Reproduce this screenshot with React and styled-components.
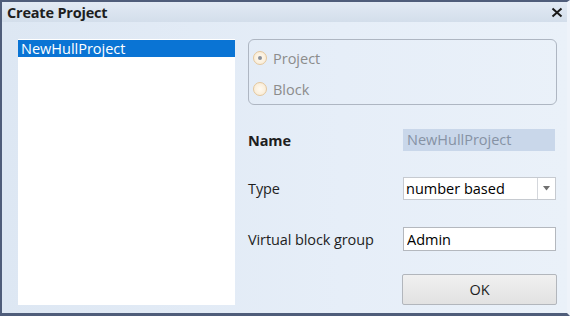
import React, { useState } from "react"
import styled, { createGlobalStyle } from "styled-components"

const Global = createGlobalStyle`
body{
margin:0;
background:#e4ecf6;
font-family:"Open Sans","DejaVu Sans",sans-serif;
}
`

const Window = styled.div`
width:570px;
height:316px;
box-sizing:border-box;
border-left:2px solid #4f5d7a;
border-top:2px solid #4f5d7a;
border-bottom:3px solid #4f5d7a;
border-right:3px solid #eef3fa;
background:linear-gradient(90deg,#dde7f3 0%,#e6eef8 60%,#eaf1f9 100%);
display:flex;
flex-direction:column;
`

const TitleBar = styled.div`
height:23px;
display:flex;
align-items:center;
justify-content:space-between;
padding:0 3px 0 5px;
background:linear-gradient(180deg,#e2eaf4 0%,#d3deeb 100%);
`

const Title = styled.span`
font-size:14.5px;
font-weight:700;
color:#1e1e1e;
letter-spacing:-0.2px;
`

const CloseBox = styled.div`
width:14px;
height:16px;
display:flex;
align-items:center;
justify-content:center;
`

const Body = styled.div`
flex:1;
display:flex;
padding:17px 10px 8px 16px;
gap:13px;
`

const ListBox = styled.div`
width:217px;
background:#fff;
display:flex;
flex-direction:column;
padding-top:1px;
`

const ListItem = styled.div`
height:17px;
line-height:17px;
padding-left:3px;
font-size:14.5px;
color:${p=>p.selected ? "#fff" : "#000"};
background:${p=>p.selected ? "#0a74d4" : "transparent"};
`

const RightPanel = styled.div`
width:309px;
display:flex;
flex-direction:column;
`

const GroupBox = styled.div`
height:66px;
box-sizing:border-box;
border:1px solid #aeb6c2;
border-radius:6px;
display:flex;
flex-direction:column;
gap:11px;
padding:8px 0 0 4px;
`

const RadioRow = styled.label`
display:flex;
align-items:center;
gap:6px;
height:20px;
font-size:14.5px;
color:#8c8c8c;
`

const RadioDot = styled.span`
width:12px;
height:12px;
border-radius:50%;
border:1px solid #e4c79c;
background:radial-gradient(circle,#fffaf1 0%,#f7e8cf 100%);
display:flex;
align-items:center;
justify-content:center;
&::after{
content:"";
width:4px;
height:4px;
border-radius:50%;
background:${p=>p.checked ? "#8a8f99" : "transparent"};
}
`

const FormRow = styled.div`
display:flex;
align-items:center;
margin-top:${p=>p.top}px;
`

const Label = styled.span`
width:155px;
font-size:14.5px;
font-weight:${p=>p.bold ? 700 : 400};
color:#1e1e1e;
letter-spacing:-0.1px;
`

const ReadOnlyField = styled.div`
width:152px;
height:22px;
box-sizing:border-box;
background:#c9d7ea;
padding-left:4px;
line-height:21px;
font-size:14.5px;
color:#8692a4;
`

const Combo = styled.div`
width:153px;
height:23px;
box-sizing:border-box;
border:1px solid #c6cad0;
background:#fff;
display:flex;
`

const ComboText = styled.span`
flex:1;
padding-left:2px;
line-height:21px;
font-size:14.5px;
color:#000;
`

const ComboButton = styled.div`
width:17px;
border-left:1px solid #d4d7dc;
display:flex;
align-items:center;
justify-content:center;
`

const TextInput = styled.input`
width:153px;
height:24px;
box-sizing:border-box;
border:1px solid #b4b8be;
background:#fff;
padding:0 3px;
font-family:inherit;
font-size:14.5px;
color:#000;
outline:none;
`

const OkButton = styled.button`
width:155px;
height:31px;
margin-left:154px;
border:1px solid #b2b6bc;
border-radius:2px;
background:linear-gradient(180deg,#f0f0f0 0%,#e2e2e2 100%);
font-family:inherit;
font-size:14.5px;
color:#1e1e1e;
`

const App = () => {
	const [kind,setKind] = useState("project")
	const [group,setGroup] = useState("Admin")

	return(
		<>
			<Global/>
			<Window>
				<TitleBar>
					<Title>Create Project</Title>
					<CloseBox>
						<svg width="12" height="11" viewBox="0 0 12 11">
							<path d="M1.5 1.5 L10.5 9.5 M10.5 1.5 L1.5 9.5" stroke="#1a1a1a" strokeWidth="2"/>
						</svg>
					</CloseBox>
				</TitleBar>
				<Body>
					<ListBox>
						<ListItem selected>NewHullProject</ListItem>
					</ListBox>
					<RightPanel>
						<GroupBox>
							<RadioRow onClick={()=>setKind("project")}>
								<RadioDot checked={kind==="project"}/>
								Project
							</RadioRow>
							<RadioRow onClick={()=>setKind("block")}>
								<RadioDot checked={kind==="block"}/>
								Block
							</RadioRow>
						</GroupBox>
						<FormRow top={24}>
							<Label bold>Name</Label>
							<ReadOnlyField>NewHullProject</ReadOnlyField>
						</FormRow>
						<FormRow top={26}>
							<Label>Type</Label>
							<Combo>
								<ComboText>number based</ComboText>
								<ComboButton>
									<svg width="7" height="5" viewBox="0 0 7 5">
										<path d="M0 0 H7 L3.5 4.5 Z" fill="#707070"/>
									</svg>
								</ComboButton>
							</Combo>
						</FormRow>
						<FormRow top={27}>
							<Label>Virtual block group</Label>
							<TextInput value={group} onChange={e=>setGroup(e.target.value)}/>
						</FormRow>
						<FormRow top={23}>
							<OkButton>OK</OkButton>
						</FormRow>
					</RightPanel>
				</Body>
			</Window>
		</>
	)
}

export default App
